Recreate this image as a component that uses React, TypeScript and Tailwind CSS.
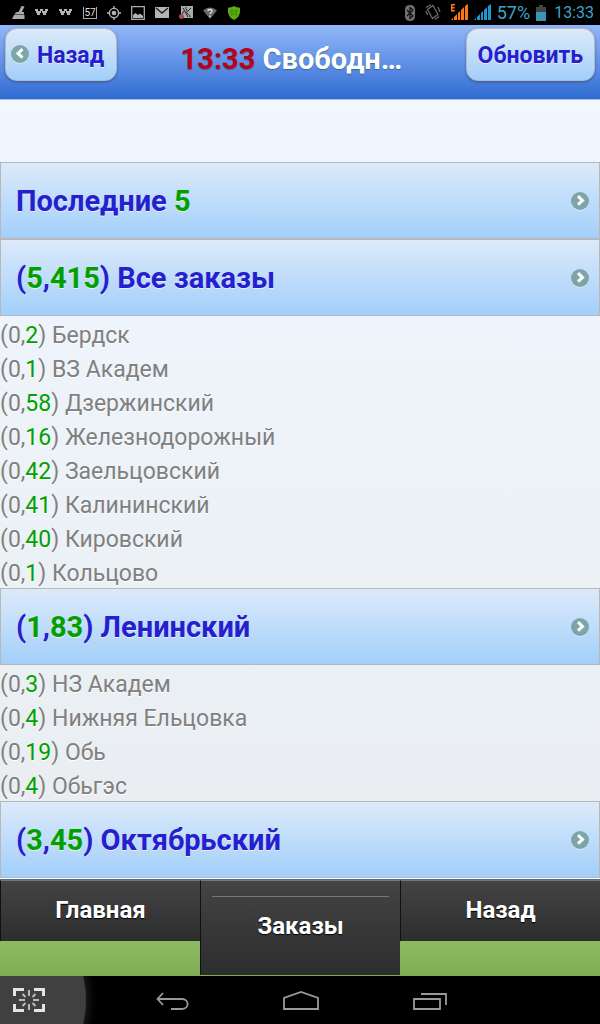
import type { ReactNode } from "react";
import clsx from "clsx";

type District = { free: number; orders: number; name: string };

const northDistricts: District[] = [
  { free: 0, orders: 2, name: "Бердск" },
  { free: 0, orders: 1, name: "ВЗ Академ" },
  { free: 0, orders: 58, name: "Дзержинский" },
  { free: 0, orders: 16, name: "Железнодорожный" },
  { free: 0, orders: 42, name: "Заельцовский" },
  { free: 0, orders: 41, name: "Калининский" },
  { free: 0, orders: 40, name: "Кировский" },
  { free: 0, orders: 1, name: "Кольцово" },
];

const southDistricts: District[] = [
  { free: 0, orders: 3, name: "НЗ Академ" },
  { free: 0, orders: 4, name: "Нижняя Ельцовка" },
  { free: 0, orders: 19, name: "Обь" },
  { free: 0, orders: 4, name: "Обьгэс" },
];

function TaxiIcon() {
  return (
    <svg width="14" height="7" viewBox="0 0 14 7" fill="#b4b4b4" shapeRendering="crispEdges">
      <path d="M0 0h3v2H0zM5 0h3v2H5zM10 0h3v2h-3zM1 2h5v2H1zM7 2h5v2H7zM2 4h3v2H2zM8 4h3v2H8z" />
    </svg>
  );
}

function SignalIcon({ color, edge }: { color: string; edge?: boolean }) {
  return (
    <svg width="17" height="17" viewBox="0 0 17 17" fill={color}>
      <path d="M0 16l2-2v2zM3 13l3-3v6H3zM7 9l2-2v9H7zM10 6l3-3v13h-3zM14 2l3-2v16h-3z" />
      {edge && <path d="M0 0h4v1.500H1.500v1.500H3.600v1.400H1.500v1.600H4v1.500H0z" />}
    </svg>
  );
}

function StatusBar() {
  return (
    <div className="flex h-[25px] items-center justify-between bg-black pl-3 pr-1.5">
      <div className="flex items-center gap-2.5">
        <svg width="13" height="14" viewBox="0 0 13 14" fill="#aaa">
          <path d="M9.500 0l3 .5-2.700 5.500H12v2.500H2.500c.5-2 2-2.500 4-2.500zM2 9h10.500v4H0l1-2z" />
        </svg>
        <TaxiIcon />
        <TaxiIcon />
        <span className="flex h-3 w-3.5 items-center justify-center border-x border-b border-[#aaa] text-[10px] text-[#ddd]">57</span>
        <svg width="14" height="14" viewBox="0 0 14 14" fill="none" stroke="#b4b4b4" strokeWidth="1.400">
          <circle cx="7" cy="7" r="4.600" />
          <circle cx="7" cy="7" r="2.300" fill="#b4b4b4" stroke="none" />
          <path d="M7 0v3M7 11v3M0 7h3M11 7h3" />
        </svg>
        <svg width="14" height="14" viewBox="0 0 14 14">
          <path d="M.7.7h12.600v12.600H.7z" fill="none" stroke="#aaa" strokeWidth="1.300" />
          <path d="M2 12V9l2.500-2L7 9l2-1.500 3 2.500v2z" fill="#b4b4b4" />
        </svg>
        <svg width="14" height="11" viewBox="0 0 14 11">
          <path d="M0 0h14v11H0z" fill="#b4b4b4" />
          <path d="M1 1l6 5 6-5" fill="none" stroke="#222" strokeWidth="1.400" />
        </svg>
        <svg width="14" height="14" viewBox="0 0 14 14">
          <path d="M2 0h12v12H5l-3-4z" fill="#aaa" />
          <path d="M4 2l5 9M7 1c-1 3 2 3 1 5s3 2 3 5M12 2L9 5M5 5L3 8" stroke="#222" fill="none" />
          <circle cx="2.500" cy="10.500" r="2.500" fill="#b04848" />
        </svg>
        <svg width="14" height="12" viewBox="0 0 14 12">
          <path d="M0 3.500Q7-2.500 14 3.500L7 12z" fill="#686868" />
          <path d="M5 4c0-2 4-2 4 0S7 5.500 7 7M7 8.500V10" stroke="#ddd" fill="none" strokeWidth="1.400" />
        </svg>
        <svg width="14" height="14" viewBox="0 0 14 14">
          <path d="M7 0c2 1.300 4 1.700 6 1.700C13.500 8 12 11.500 7 14 2 11.500.5 8 1 1.700 3 1.700 5 1.300 7 0z" fill="#5cac10" />
          <path d="M3 5h8M3 8h8M5 3.500v7M9 3.500v7" stroke="#438c10" />
        </svg>
      </div>
      <div className="flex items-center gap-1.5 text-[#3aa5c9]">
        <svg width="10" height="16" viewBox="0 0 10 16">
          <rect width="10" height="16" rx="4.500" fill="#707070" />
          <path d="M2 5l6 6-3 2.500v-11L8 5l-6 6" fill="none" stroke="#111" strokeWidth="1.200" />
        </svg>
        <svg width="16" height="17" viewBox="0 0 16 17" fill="none" stroke="#6a6a6a" strokeWidth="1.300" className="ml-1">
          <path d="M8 1.500l5 9-5.500 4-5-9zM1 3.500L6 .7M.7 7l2 4M10 15.500l4-3M13 3l2 5" />
        </svg>
        <span className="ml-1 flex gap-1.5">
          <SignalIcon color="#ff7410" edge />
          <SignalIcon color="#1b98d4" />
        </span>
        <span className="text-lg">57%</span>
        <svg width="10" height="16" viewBox="0 0 10 16">
          <path d="M3 0h4v2h3v5H0V2h3z" fill="#444" />
          <path d="M0 7h10v9H0z" fill="#3a94b8" />
        </svg>
        <span className="ml-0.5 text-base">13:33</span>
      </div>
    </div>
  );
}

function ArrowBadge({ left }: { left?: boolean }) {
  return (
    <svg width="18" height="19" viewBox="0 0 18 19" className="shrink-0">
      <circle cx="9" cy="10" r="9" fill="#fff" opacity=".4" />
      <circle cx="9" cy="9" r="9" fill="#7ba5a7" />
      <path d={left ? "M11.500 4.200L7 8.400l4.500 4.200" : "M7 4.200l4.500 4.200L7 12.600"} fill="none" stroke="#fff" strokeWidth="3" />
    </svg>
  );
}

function HeaderButton({ children }: { children: ReactNode }) {
  return (
    <button className="flex h-[53px] items-center gap-2 rounded-xl border border-[#b5b9c0] bg-linear-to-b from-[#dceafa] to-[#a2cffa] text-[23px] font-bold text-[#2520cf] shadow-[0_1px_3px_rgba(0,0,0,0.3)] text-shadow-[0_1px_1px_#eee] first:pl-[5px] first:pr-3 last:px-[11px]">
      {children}
    </button>
  );
}

function Green({ children }: { children: ReactNode }) {
  return <span className="text-[#00a000]">{children}</span>;
}

function ListLink({ children }: { children: ReactNode }) {
  return (
    <li>
      <a
        href="#"
        className="flex h-[77px] items-center justify-between border border-[#b8b8b8] bg-linear-to-b from-[#dceafa] to-[#a2cffa] pl-[15px] pr-2.5 pt-0.5 text-[29px] font-bold text-[#2520cf] text-shadow-[0_1px_0_#eee]"
      >
        <span>{children}</span>
        <ArrowBadge />
      </a>
    </li>
  );
}

function DistrictRow({ free, orders, name }: District) {
  return (
    <li className="h-[34px] text-[23px] leading-[40px] text-[#808080] text-shadow-[0_1px_0_#fff]">
      ({free},<Green>{orders}</Green>) {name}
    </li>
  );
}

function Tab({ active, children }: { active?: boolean; children: ReactNode }) {
  return (
    <a
      href="#"
      className={clsx(
        "flex flex-col border-l border-t border-l-[#111] border-t-[#777] bg-linear-to-b from-[#444] to-[#2d2d2d] text-center text-2xl font-bold text-white text-shadow-[0_1px_1px_#000]",
        active ? "h-[95px] px-[11px] pt-[15px]" : "h-[61px]",
      )}
    >
      {active && <span className="border-t border-[#777]" />}
      <span className="leading-[59px]">{children}</span>
    </a>
  );
}

function SystemBar() {
  return (
    <div className="relative flex h-12 items-center justify-center gap-[94px] overflow-hidden bg-black pl-0.5">
      <div className="absolute -left-[114px] -top-[76px] size-[200px] rounded-full bg-[#404040] shadow-[0_0_12px_#333]" />
      <button aria-label="Снимок экрана" className="absolute left-[13px] top-3">
        <svg width="32" height="24" viewBox="0 0 32 24" fill="none">
          <path d="M1.500 8V1.500H11M21 1.500h9.500V8M30.500 16v6.500H21M11 22.500H1.500V16" stroke="#e4e4e4" strokeWidth="3" />
          <path d="M16 2v6M16 16v6M6 12h6M20 12h6M9.500 6l3 3M22.500 6l-3 3M9.500 18l3-3M22.500 18l-3-3" stroke="#bbb" strokeWidth="2" />
        </svg>
      </button>
      <button aria-label="Назад">
        <svg width="34" height="20" viewBox="0 0 34 20" fill="none" stroke="#999" strokeWidth="1.800">
          <path d="M8 3L2.500 9 8 15M2.500 9H27c7.500 0 7.500 10 0 10H16" />
        </svg>
      </button>
      <button aria-label="Домой">
        <svg width="36" height="20" viewBox="0 0 36 20" fill="none" stroke="#999" strokeWidth="1.800">
          <path d="M1 19V8L18 2l17 6v11z" />
        </svg>
      </button>
      <button aria-label="Недавние">
        <svg width="34" height="20" viewBox="0 0 34 20" fill="none" stroke="#999" strokeWidth="1.800">
          <path d="M1 9h26v10H1zM8 4h25v11" />
        </svg>
      </button>
    </div>
  );
}

export default function App() {
  return (
    <div className="flex min-h-screen flex-col font-[Roboto,sans-serif]">
      <StatusBar />

      <header className="flex h-[75px] items-start border-b border-[#a9bfdd] bg-linear-to-b from-[#93b7f8] to-[#2f6bd2] px-[5px] pt-[3px]">
        <HeaderButton>
          <ArrowBadge left />
          <span className="pt-1">Назад</span>
        </HeaderButton>
        <h1 className="flex-1 truncate text-center text-[29px] leading-[62px] font-bold text-white text-shadow-[0_1px_1px_#3e6790]">
          <span className="text-[#b8001c]">13:33</span> Свободн…
        </h1>
        <HeaderButton>
          <span className="pt-1">Обновить</span>
        </HeaderButton>
      </header>

      <main className="flex-1 bg-linear-to-b from-[#f0f7ff] to-[#e9edf0] pt-[62px]">
        <ul>
          <ListLink>
            Последние <Green>5</Green>
          </ListLink>
          <ListLink>
            (<Green>5</Green>,<Green>415</Green>) Все заказы
          </ListLink>
          {northDistricts.map((d) => (
            <DistrictRow key={d.name} {...d} />
          ))}
          <ListLink>
            (<Green>1</Green>,<Green>83</Green>) Ленинский
          </ListLink>
          {southDistricts.map((d) => (
            <DistrictRow key={d.name} {...d} />
          ))}
          <ListLink>
            (<Green>3</Green>,<Green>45</Green>) Октябрьский
          </ListLink>
        </ul>
      </main>

      <footer>
        <nav className="mt-px grid h-[97px] grid-cols-3 items-start border-t border-[#456f9e] bg-linear-to-b from-[#a9d27f] to-[#80ad55]">
          <Tab>Главная</Tab>
          <Tab active>Заказы</Tab>
          <Tab>Назад</Tab>
        </nav>
        <SystemBar />
      </footer>
    </div>
  );
}
